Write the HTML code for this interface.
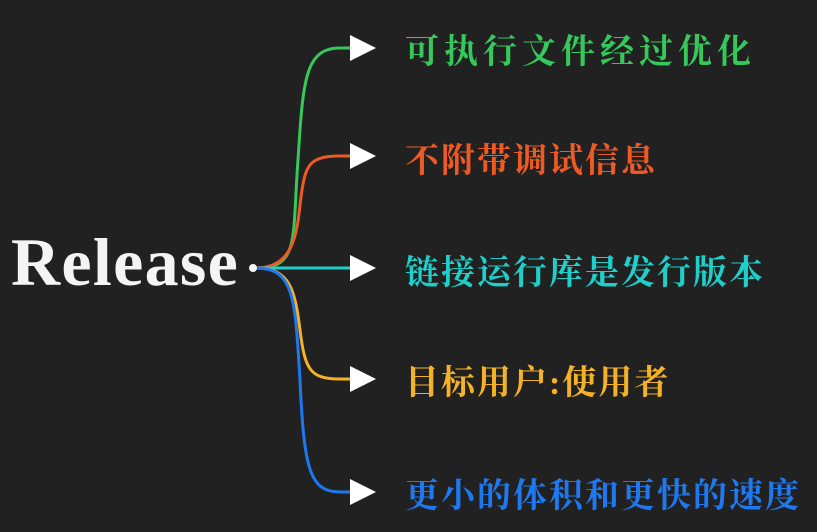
<!DOCTYPE html>
<html><head><meta charset="utf-8"><style>
html,body{margin:0;padding:0;background:#212121;}
body{width:817px;height:532px;position:relative;overflow:hidden;font-family:"Liberation Sans","Noto Sans CJK SC",sans-serif;}
.r{position:absolute;left:11px;top:223px;font-family:"Liberation Serif",serif;font-size:68px;color:#f4f4f4;font-weight:bold;letter-spacing:1.3px;}
.t{position:absolute;left:405px;font-size:34px;font-weight:bold;white-space:nowrap;letter-spacing:2px;font-family:"Liberation Serif","Noto Serif CJK SC",serif;}
</style></head><body>
<svg width="817" height="532" style="position:absolute;left:0;top:0">
<g fill="none" stroke-width="3">
<path d="M256 268 C300 268 292 240 298 160 C303 80 305 48 340 48 L352 48" stroke="#35c85a"/>
<path d="M256 268 C300 268 297 220 302 190 C306 165 310 156 340 156 L352 156" stroke="#ee5a24"/>
<path d="M256 268 L352 268" stroke="#1fcfc9"/>
<path d="M256 268 C290 268 295 290 300 330 C305 370 310 379 340 379 L352 379" stroke="#f5b227"/>
<path d="M256 268 C295 268 295 300 300 380 C304 470 310 492 340 492 L352 492" stroke="#1e78f0"/>
</g>
<circle cx="253" cy="268" r="4" fill="#f4f4f4"/>
<g fill="#ffffff">
<polygon points="350,35 376,48 350,61"/>
<polygon points="350,143 376,156 350,169"/>
<polygon points="350,255 376,268 350,281"/>
<polygon points="350,366 376,379 350,392"/>
<polygon points="350,479 376,492 350,505"/>
</g>
</svg>
<div class="r">Release</div>
<div class="t" style="top:24px;color:#35c85a;letter-spacing:5px">可执行文件经过优化</div>
<div class="t" style="top:133px;color:#ee5a24">不附带调试信息</div>
<div class="t" style="top:245px;color:#1fcfc9">链接运行库是发行版本</div>
<div class="t" style="top:355px;color:#f5b227">目标用户:使用者</div>
<div class="t" style="top:468px;color:#1e78f0">更小的体积和更快的速度</div>
</body></html>
